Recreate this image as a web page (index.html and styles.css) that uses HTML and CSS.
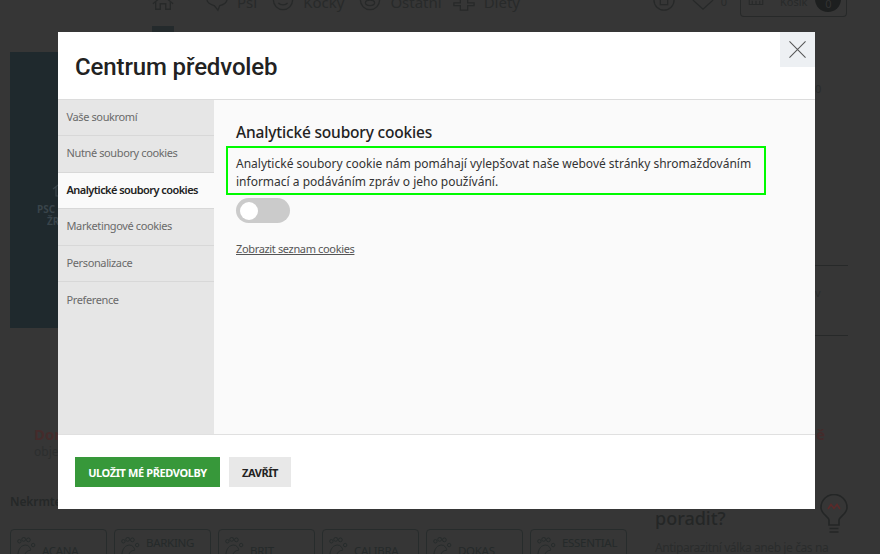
FILE: index.html
```html
<!DOCTYPE html>
<html lang="cs">
<head>
<meta charset="utf-8">
<title>Centrum předvoleb</title>
<link rel="stylesheet" href="styles.css">
</head>
<body>
<div class="page">
  <header class="topbar">
    <nav class="mainnav">
      <svg class="ico home" viewBox="0 0 24 24"><path d="M1 3 12 -6 23 3M4 1V9H9V3H15V9H20V1"/></svg>
      <svg class="ico dog" viewBox="0 0 24 24"><path d="M1 -2C1 3 6 4 9 5L13 10 15 5C19 4 23 2 23 -2"/></svg><span class="navlabel">Psi</span>
      <svg class="ico cat" viewBox="0 0 24 24"><circle cx="12" cy="-1" r="10.500"/><path d="M7 2C9 5 15 5 17 2"/></svg><span class="navlabel">Kočky</span>
      <svg class="ico other" viewBox="0 0 24 24"><circle cx="12" cy="-1" r="10.500"/><ellipse cx="12" cy="2" rx="5" ry="3"/></svg><span class="navlabel">Ostatní</span>
      <svg class="ico diet" viewBox="0 0 24 24"><path d="M8 -4V2H1V5H8V10H16V5H23V2H16V-4"/></svg><span class="navlabel">Diety</span>
    </nav>
    <div class="tools">
      <svg class="ico round" viewBox="0 0 24 24"><circle cx="12" cy="-1" r="11"/><rect x="8" y="-4" width="8" height="8"/></svg>
      <svg class="ico heart" viewBox="0 0 24 24"><path d="M1 -1 12 9 23 -1"/></svg><span class="count">0</span>
      <div class="cart">
        <svg class="ico carticon" viewBox="0 0 24 24"><path d="M3 2V10H21V2M7 5V10M12 5V10M17 5V10"/></svg>
        <span class="cartlabel">Košík</span><span class="cartbadge">0</span>
      </div>
    </div>
  </header>
  <div class="tab"></div>
  <section class="upper">
    <div class="hero">
      <svg class="heroicon" viewBox="0 0 20 16"><path d="M1 8 10 1 19 8M4 6V15H16V6"/></svg>
      <div class="herotext">PSC<br><span class="heroline">ŽR</span></div>
    </div>
    <aside class="side">
      <span class="sidetext first">0</span>
      <span class="rule one"></span>
      <span class="sidetext second">v</span>
      <span class="rule two"></span>
    </aside>
  </section>
  <section class="lower">
    <div class="notices">
      <div class="notice"><b>Dor</b><span>obje</span></div>
      <b class="notice-end">ně</b>
    </div>
    <div class="bottom">
      <div class="brands">
        <p class="lead">Nekrmte</p>
        <div class="brandgrid">
          <div class="brand"><svg class="paw" viewBox="0 0 20 20"><use href="#paw"/></svg>ACANA</div>
          <div class="brand"><svg class="paw" viewBox="0 0 20 20"><use href="#paw"/></svg><span>BARKING HEADS</span></div>
          <div class="brand"><svg class="paw" viewBox="0 0 20 20"><use href="#paw"/></svg>BRIT</div>
          <div class="brand"><svg class="paw" viewBox="0 0 20 20"><use href="#paw"/></svg>CALIBRA</div>
          <div class="brand"><svg class="paw" viewBox="0 0 20 20"><use href="#paw"/></svg>DOKAS</div>
          <div class="brand"><svg class="paw" viewBox="0 0 20 20"><use href="#paw"/></svg><span>ESSENTIAL FOODS</span></div>
        </div>
      </div>
      <div class="advice">
        <svg class="bulb" viewBox="0 0 28 40"><path d="M9 26C8 22 1 20 1 13.500A13 13 0 0 1 27 13.500C27 20 20 22 19 26V31H9ZM9.500 34.500H18.500M9.500 38H18.500"/><path class="spark" d="M8 15 11 10.500 14 14.500 17 10.500 20 15"/></svg>
        <h3>poradit?</h3>
        <p>Antiparazitní válka aneb je čas na</p>
      </div>
    </div>
  </section>
</div>

<svg class="defs" width="0" height="0"><symbol id="paw" viewBox="0 0 20 20"><circle cx="2.500" cy="4.500" r="1.800"/><circle cx="7" cy="2.500" r="2"/><circle cx="12" cy="3" r="2"/><circle cx="17" cy="8.500" r="1.800"/><path d="M1 19.500C1 12 5 8.500 9 8.500C12 8.500 14 11 14.500 13.500M8.500 19.500C8.500 16 11 14 14.500 14"/></symbol></svg>

<div class="modal" role="dialog" aria-label="Centrum předvoleb">
  <div class="modal-head">
    <h2 class="modal-title">Centrum předvoleb</h2>
    <button class="close" aria-label="Zavřít"><svg viewBox="0 0 18 18"><path d="M.5.500 17.500 17.500M17.500.500 .5 17.500"/></svg></button>
  </div>
  <div class="modal-body">
    <ul class="menu">
      <li class="menu-item">Vaše soukromí</li>
      <li class="menu-item">Nutné soubory cookies</li>
      <li class="menu-item active">Analytické soubory cookies</li>
      <li class="menu-item">Marketingové cookies</li>
      <li class="menu-item">Personalizace</li>
      <li class="menu-item">Preference</li>
    </ul>
    <div class="panel">
      <h3 class="panel-title">Analytické soubory cookies</h3>
      <p class="panel-text">Analytické soubory cookie nám pomáhají vylepšovat naše webové stránky shromažďováním informací a podáváním zpráv o jeho používání.</p>
      <div class="toggle"><span class="knob"></span></div>
      <a class="panel-link" href="#">Zobrazit seznam cookies</a>
    </div>
  </div>
  <div class="modal-foot">
    <button class="btn save">Uložit mé předvolby</button>
    <button class="btn dismiss">Zavřít</button>
  </div>
</div>
</body>
</html>
```
FILE: styles.css
```css
* { box-sizing: border-box; }
html, body { margin: 0; height: 100%; overflow: hidden; }
body { background: #363636; font-family: "Noto Sans", "Open Sans", sans-serif; color: #2a2c2c; }
.defs { position: absolute; }

.page { width: 880px; height: 554px; overflow: hidden; }

.topbar { height: 17px; display: flex; justify-content: space-between; align-items: flex-start; padding: 0 33px 0 152px; overflow: hidden; }
.mainnav { display: flex; align-items: flex-start; height: 17px; font-size: 15px; color: #282a2a; }
.ico { width: 22px; height: 24px; flex: none; fill: none; stroke: #272929; stroke-width: 1.400; overflow: visible; }
.home { margin-right: 32px; }
.navlabel { margin: -8px 15px 0 9px; line-height: 20px; }
.navlabel:last-child { margin-right: 0; }
.other + .navlabel { margin-right: 11px; }
.tools { display: flex; align-items: flex-start; }
.round { margin-right: 17px; }
.heart { margin-right: 7px; }
.count { font-size: 11px; line-height: 12px; color: #282a2a; margin: -4px 13px 0 0; }
.cart { width: 107px; height: 17px; border: 1px solid #272929; border-top: 0; border-radius: 0 0 4px 4px; display: flex; padding-left: 6px; overflow: hidden; }
.carticon { width: 18px; height: 18px; margin-top: -3px; }
.cartlabel { font-size: 11px; line-height: 10px; margin-left: 15px; color: #282a2a; margin-top: -3px; }
.cartbadge { width: 26px; height: 26px; border-radius: 50%; background: #1d1f1f; margin-left: 8px; margin-top: -14px; font-size: 11px; text-align: center; line-height: 36px; color: #333; }

.tab { width: 22px; height: 6px; margin: 9px 0 0 152px; background: #242a2c; }

.upper { height: 276px; margin-top: 20px; padding: 0 32px 0 10px; display: flex; justify-content: space-between; }
.hero { width: 300px; background: #1f292d; padding: 129px 0 0 27px; }
.heroicon { display: block; width: 20px; height: 16px; margin-left: 15px; fill: none; stroke: #39444a; stroke-width: 1.200; }
.herotext { margin-top: 6px; font-size: 10px; font-weight: 700; color: #39444a; line-height: 12px; }
.heroline { margin-left: 10px; }
.side { width: 40px; display: flex; flex-direction: column; font-size: 11px; line-height: 15px; color: #2a2c2c; }
.sidetext.first { margin: 29px 0 0 7px; }
.rule { border-top: 1px solid #272929; }
.rule.one { margin-top: 169px; }
.sidetext.second { margin: 19px 0 0 7px; }
.rule.two { margin-top: 35px; }

.lower { padding: 97px 0 0 10px; }
.notices { display: flex; justify-content: space-between; padding: 0 55px 0 24px; font-size: 15px; height: 40px; }
.notice { display: flex; flex-direction: column; }
.notice b { color: #442b2b; line-height: 18px; }
.notice span { font-size: 12px; color: #2c2e2e; }
.notice-end { color: #442b2b; line-height: 18px; }

.bottom { display: flex; margin-top: 29px; }
.brands { width: 645px; }
.lead { margin: 0 0 20px; font-size: 12px; line-height: 15px; font-weight: 600; color: #252828; letter-spacing: -.1px; }
.brandgrid { display: grid; grid-template-columns: repeat(6, 97px); column-gap: 7px; }
.brand { height: 42px; border: 1px solid #272c2c; border-radius: 4px; display: flex; align-items: center; gap: 6px; padding: 0 6px; font-size: 11.500px; line-height: 15px; color: #252a2a; letter-spacing: -.3px; }
.paw { width: 19px; height: 19px; flex: none; fill: none; stroke: #252a2a; stroke-width: .9; align-self: flex-start; margin-top: 7px; }
.advice { position: relative; width: 200px; margin-top: 13px; }
.advice h3 { margin: 0 0 10px; font-size: 18px; font-weight: 500; color: #242626; line-height: 22px; }
.advice p { margin: 0; font-size: 12px; color: #2a2c2c; white-space: nowrap; letter-spacing: -.4px; }
.bulb { position: absolute; left: 165px; top: -13px; width: 28px; height: 40px; fill: none; stroke: #242626; stroke-width: 1.600; }
.bulb .spark { stroke: #5a2a2a; }

.modal { position: absolute; left: 58px; top: 32px; width: 757px; height: 477px; background: #fff; display: flex; flex-direction: column; color: #2a2a2a; }
.modal-head { height: 68px; flex: none; border-bottom: 1px solid #dcdcdc; padding: 20px 0 0 17px; }
.modal-title { margin: 0; font-family: Roboto, "Noto Sans", sans-serif; font-size: 24px; line-height: 30px; font-weight: 500; color: #222; letter-spacing: -.12px; }
.close { position: absolute; right: 0; top: 0; width: 35px; height: 35px; padding: 9px; border: 0; background: #edf0f3; }
.close svg { display: block; width: 17px; height: 17px; fill: none; stroke: #555; stroke-width: 1.100; }

.modal-body { flex: 1; display: flex; min-height: 0; background: #fafafa; }
.menu { width: 156px; flex: none; margin: 0; padding: 0; list-style: none; background: #e6e6e6; display: grid; grid-template-rows: 36px repeat(5, 36.500px); align-content: start; }
.menu-item { padding: 0 4px 2px 8.500px; display: flex; align-items: center; font-size: 11px; color: #6a6a6a; border-bottom: 1px solid #d8d8d8; letter-spacing: -.38px; white-space: nowrap; }
.menu-item:last-child { border-bottom: 0; }
.menu-item.active { background: #fafafa; color: #222; font-weight: 600; letter-spacing: -.56px; }

.panel { flex: 1; padding: 21px 49px 0 12px; display: flex; flex-direction: column; align-items: flex-start; }
.panel-title { margin: 0 0 3px 10px; font-size: 15.500px; line-height: 22px; font-weight: 500; color: #222; letter-spacing: -.18px; }
.panel-text { margin: 0; width: 540px; height: 49px; padding: 7px 8px 5px; border: 2px solid #00fa00; font-size: 12px; line-height: 18px; color: #333; }
.toggle { width: 54px; height: 25px; margin: 3px 0 0 10px; border-radius: 13px; background: #cbcbcb; padding: 4px; }
.knob { display: block; width: 18px; height: 18px; border-radius: 50%; background: #fff; }
.panel-link { margin: 18px 0 0 10px; font-size: 11px; line-height: 15px; color: #555; letter-spacing: -.35px; }

.modal-foot { height: 75px; flex: none; display: flex; align-items: flex-start; gap: 9px; padding: 22px 0 0 17px; border-top: 1px solid #e0e0e0; }
.btn { height: 30px; border: 0; padding: 0; font-family: inherit; font-size: 11px; font-weight: 700; text-transform: uppercase; letter-spacing: -.4px; }
.save { width: 145px; background: #37983a; color: #fff; }
.dismiss { width: 62px; background: #e8e8e8; color: #222; }
```
